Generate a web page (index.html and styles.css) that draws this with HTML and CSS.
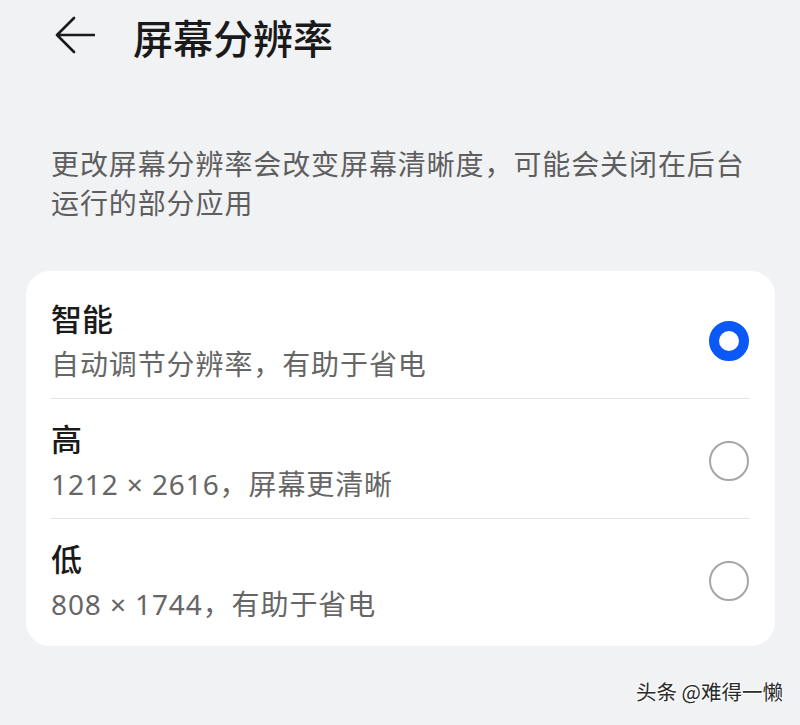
FILE: index.html
```html
<!DOCTYPE html>
<html>
<head>
    <meta charset="utf-8">
    <title>屏幕分辨率</title>
    <link rel="stylesheet" href="styles.css">
</head>
<body>
    <div class="header">
        <svg class="back" width="40" height="40" viewBox="0 0 40 40">
            <path d="M19 2 L2 19 L19 36 M2 19 L40 19" fill="none" stroke="#1a1a1a" stroke-width="2.6" stroke-linecap="round" stroke-linejoin="round"/>
        </svg>
        <h1>屏幕分辨率</h1>
    </div>

    <p class="desc">更改屏幕分辨率会改变屏幕清晰度，可能会关闭在后台运行的部分应用</p>

    <div class="card">
        <div class="row">
            <div class="text">
                <div class="title">智能</div>
                <div class="sub">自动调节分辨率，有助于省电</div>
            </div>
            <span class="radio checked"></span>
        </div>
        <div class="row">
            <div class="text">
                <div class="title">高</div>
                <div class="sub">1212 × 2616，屏幕更清晰</div>
            </div>
            <span class="radio"></span>
        </div>
        <div class="row">
            <div class="text">
                <div class="title">低</div>
                <div class="sub">808 × 1744，有助于省电</div>
            </div>
            <span class="radio"></span>
        </div>
    </div>

    <div class="watermark">头条 @难得一懒</div>
</body>
</html>
```

FILE: styles.css
```css
body {
    font-family: "Noto Sans", "Noto Sans CJK SC", sans-serif;
    background-color: #f1f2f4;
    margin: 0;
    padding: 0;
    height: 725px;
    position: relative;
    overflow: hidden;
}

.header {
    display: flex;
    align-items: center;
    height: 74px;
    padding-left: 55px;
}

.back {
    display: block;
    margin-top: -2px;
}

h1 {
    font-family: "Noto Sans CJK SC", sans-serif;
    font-size: 40px;
    font-weight: 500;
    color: #1a1a1a;
    margin: 0 0 0 38px;
    line-height: 1;
}

.desc {
    font-family: "Noto Sans CJK SC", sans-serif;
    font-size: 28px;
    letter-spacing: 0.9px;
    line-height: 39px;
    color: #5e5e5e;
    margin: 70px 0 0;
    padding: 0 50px 0 51px;
}

.card {
    background-color: #fff;
    border-radius: 24px;
    margin: 49px 25px 0 26px;
    padding: 8px 26px 7px 25px;
}

.row {
    display: flex;
    align-items: center;
    height: 120px;
    box-sizing: border-box;
    padding-top: 4px;
    border-bottom: 1px solid #e3e3e3;
    margin-right: -1px;
}

.row:last-child {
    border-bottom: none;
}

.text {
    flex: 1;
}

.title {
    font-family: "Noto Sans CJK SC", sans-serif;
    font-size: 31px;
    font-weight: 500;
    line-height: 40px;
    color: #1a1a1a;
}

.sub {
    font-size: 28px;
    letter-spacing: 0.9px;
    line-height: 40px;
    margin-top: 6px;
    color: #666;
}

.radio {
    width: 40px;
    height: 40px;
    box-sizing: border-box;
    border: 2px solid #a6a6a6;
    border-radius: 50%;
    margin-right: 1px;
}

.radio.checked {
    border: 10px solid #0a59f7;
}

.watermark {
    position: absolute;
    right: 17px;
    bottom: 19px;
    font-family: "Noto Sans CJK SC", sans-serif;
    font-size: 20.5px;
    color: #2a2a2a;
    text-shadow: 1px 1px 0 #fff, -1px -1px 0 #fff;
}
```
